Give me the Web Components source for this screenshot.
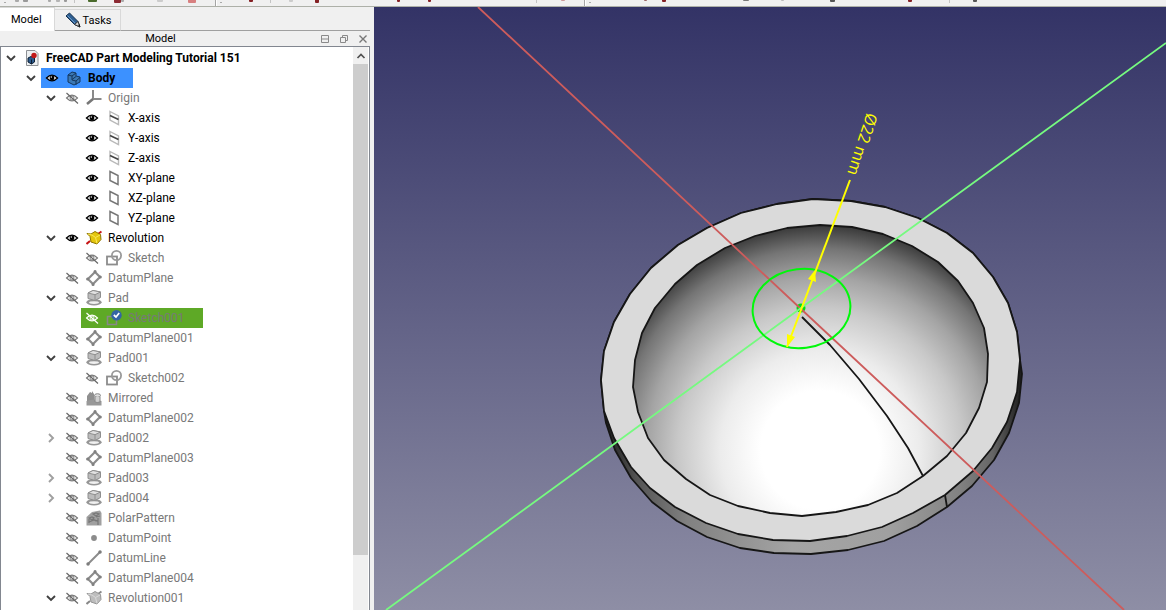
<!DOCTYPE html>
<html lang="en">
<head>
<meta charset="utf-8">
<title>FreeCAD</title>
<style>
  html, body { margin: 0; height: 100%; }
  body { font-family: Roboto, "Open Sans", sans-serif; font-size: 12px; color: #000; background: #f0f0f0; overflow: hidden; }
</style>
</head>
<body>
<cad-app></cad-app>

<script>
const ICONS = {
  doc: '<path d="M2.500 0.500H11L14 3.500V15.500H2.500Z" fill="#eceff1" stroke="#8d9094"/><path d="M4 8L7 6.500L10.500 8V12L7.500 14L4 12Z" fill="#2c5a8c" stroke="#0b1d33"/><path d="M7.500 9.500V14" stroke="#0b1d33"/><circle cx="10" cy="5.500" r="2.700" fill="#c21a1a"/>',
  body: '<path d="M2 5L6 2L10 3V6L14 7V12L8 15L2 12Z" fill="#3b78b4" stroke="#14365c"/><path d="M2 5L6 6V10L10 11V15M6 6L10 3M10 11L14 7.500M6 9.500L10 6.500" fill="none" stroke="#14365c"/>',
  origin: '<path d="M7 0V9H15.500" fill="none" stroke="#8a8a8a" stroke-width="2"/><path d="M7 9L1 14" stroke="#777" stroke-width="2.600"/>',
  axis: '<path d="M4 1.500L12.500 6V14.500L4 10Z" fill="none" stroke="#b9b9b9" stroke-width="1.400"/><path d="M4 5.500L12.500 9.500" stroke="#444" stroke-width="1.600"/>',
  plane: '<path d="M4 1.500L12 5.500V14.500L4 10.500Z" fill="#fff" stroke="#777" stroke-width="1.500"/>',
  revolution: '<path d="M0.500 14L4 11M12 4L15.500 1.500" stroke="#c61414" stroke-width="2"/><path d="M1 3.500L4 6.500L5 12L11 14L15 9.500L14.500 4.500L9 1.500L5 4Z" fill="#e4c60e" stroke="#8f7500"/><path d="M2 4L6 5L9.500 7.500L14 5M9.500 7.500L11 13.500" fill="none" stroke="#fae95d"/>',
  revolutionOff: '<path d="M0.500 14L4 11M12 4L15.500 1.500" stroke="#888" stroke-width="2"/><path d="M1 3.500L4 6.500L5 12L11 14L15 9.500L14.500 4.500L9 1.500L5 4Z" fill="#bdbdbd" stroke="#959595"/><path d="M2 4L6 5L9.500 7.500L14 5M9.500 7.500L11 13.500" fill="none" stroke="#dadada"/>',
  sketch: '<rect x="1" y="6.500" width="10" height="8" fill="none" stroke="#8c8c8c" stroke-width="1.800"/><circle cx="10.500" cy="5.500" r="4.600" fill="none" stroke="#9a9a9a" stroke-width="1.800"/>',
  sketchEdit: '<path d="M6 6.500H1.500V14.500H10.500V10" fill="none" stroke="#888" stroke-width="1.600"/><circle cx="10.500" cy="5.200" r="5.200" fill="#3465a4"/><path d="M7.800 5L10 7L13.200 3" fill="none" stroke="#fff" stroke-width="1.700"/>',
  datumPlane: '<path d="M9 2L14 7L7 14L2 9Z" fill="#fff" stroke="#8c8c8c" stroke-width="2.200"/><path d="M9 1.500h.1M14.200 7h.1M7 14.500h.1M1.600 9h.1" stroke="#808080" stroke-width="3" stroke-linecap="round"/>',
  pad: '<ellipse cx="8" cy="12.300" rx="7.600" ry="3.200" fill="#969696"/><ellipse cx="8" cy="12.600" rx="5" ry="1.400" fill="#f0f0f0"/><path d="M2 3L7 0.500L14.500 2V7.500L9 10.500L2 8.500Z" fill="#bcbcbc" stroke="#8e8e8e"/><path d="M2 3L7 0.500L14.500 2L9 4.700Z" fill="#e0e0e0" stroke="#8e8e8e"/><path d="M9 5V10" stroke="#8e8e8e"/>',
  mirrored: '<path d="M1 15V6L4 2L6 3V1L8 4V15Z" fill="#8f8f8f"/><path d="M8 15V6L10 4H14V15Z" fill="#bbb"/><ellipse cx="11.500" cy="5.500" rx="3" ry="1.800" fill="#ddd" stroke="#888"/><path d="M0.500 11Q8 8 15.500 11V15.500H0.500Z" fill="#999"/><path d="M9 7V12Q11 13 14 12V7" fill="#d0d0d0" stroke="#888"/>',
  polar: '<path d="M0.500 15.500V7L6 2L14 0.500L15.500 3V15.500Z" fill="#a0a0a0"/><path d="M3 8l3-1 2 1-2 2zM7 4l3-1 3 1-3 2zM10 7l4-1M3 12l5-2 4 1v4M7 9l3 2M12 8v3M3 9v4" fill="none" stroke="#777" stroke-width="1.200"/>',
  point: '<circle cx="8" cy="8" r="2.900" fill="#8c8c8c"/>',
  line: '<path d="M2 14L14 2" stroke="#8c8c8c" stroke-width="2"/><path d="M2 14h.1M14 2h.1" stroke="#7d7d7d" stroke-width="3.400" stroke-linecap="round"/>',
  eye: '<path d="M2.500 8Q8 2.300 13.500 8Q8 13.700 2.500 8Z" fill="#fff" stroke="#000" stroke-width="1.400"/><circle cx="8" cy="8" r="2.400" fill="#000"/><circle cx="7.300" cy="7" r="0.700" fill="#fff"/>',
  eyeOff: '<path d="M2.500 8Q8 2.300 13.500 8Q8 13.700 2.500 8Z" fill="var(--eye-fill,#fff)" stroke="var(--eye-ink,#7c7c7c)" stroke-width="1.100"/><circle cx="8" cy="8" r="2" fill="none" stroke="var(--eye-ink,#7c7c7c)"/><path d="M2.500 3L14 13.500" stroke="var(--eye-ink,#666)" stroke-width="1.200"/>',
  open: '<path d="M4 6L8 10L12 6" fill="none" stroke="#404040" stroke-width="1.900"/>',
  closed: '<path d="M6 4L10 8L6 12" fill="none" stroke="#a0a0a0" stroke-width="1.900"/>',
  up: '<path d="M4.500 10L8 6.500L11.500 10" fill="none" stroke="#505050" stroke-width="1.700"/>',
  pencil: '<path d="M1 4L4.500 1L13 9.500L15 15L9.500 12.500Z" fill="#2f5f92" stroke="#142f4d"/><path d="M2.500 3.500L10.500 11.500" stroke="#6b9bc8"/><path d="M9.500 12.500L13 9.500L15 15Z" fill="#d9d9d9" stroke="#333"/><path d="M13 13L15 15V12.500Z" fill="#111"/>',
  shade: '<path d="M4.500 4.500H11.500V11.500H4.500ZM4.500 8H11.500" fill="none" stroke="#8a8a8a"/>',
  float: '<path d="M4.500 6.500H9.500V11.500H4.500ZM6.500 6.500V4.500H11.500V9.500H9.500" fill="none" stroke="#8a8a8a"/>',
  close: '<path d="M4.500 4.500L11.500 11.500M11.500 4.500L4.500 11.500" stroke="#777" stroke-width="1.400"/>'
};

class UiIcon extends HTMLElement {
  connectedCallback() {
    this.attachShadow({ mode: 'open' }).innerHTML = `
      <style>:host{display:inline-flex;flex:none;width:16px;height:16px}svg{display:block;width:100%;height:100%}</style>
      <svg viewBox="0 0 16 16" aria-hidden="true">${ICONS[this.getAttribute('name')] || ''}</svg>`;
  }
}
customElements.define('ui-icon', UiIcon);

class CadToolbar extends HTMLElement {
  connectedCallback() {
    // Lower edges of the tool buttons: [x, width, height, colour]
    const bits = [[15,4,2,'#aaa'],[23,5,2,'#999'],[48,3,2,'#aaa'],[56,4,2,'#b5b5b5'],[64,3,2,'#999'],[88,9,2,'#4a6b2c'],[114,7,3,'#8b2a32'],[121,3,2,'#aaa'],[157,6,2,'#ccc'],[188,8,3,'#d88080'],[249,4,2,'#842024'],[289,4,2,'#ccc'],[315,4,3,'#842024'],[397,3,2,'#842024'],[428,3,2,'#842024'],[561,4,1,'#c99'],[644,3,1,'#966'],[662,4,2,'#842024'],[743,6,1,'#777'],[781,3,1,'#bbb'],[830,5,2,'#555'],[908,4,2,'#842024'],[973,4,2,'#555']];
    const grips = [5, 221, 590], seps = [75, 271, 537, 950], ends = [216, 585];
    this.attachShadow({ mode: 'open' }).innerHTML = `
      <style>:host{display:block;background:#f0f0f0;border-bottom:1px solid #adb0a8;overflow:hidden}svg{display:block;height:6px;width:100%}</style>
      <svg aria-hidden="true">
        ${bits.map(([x, w, h, c]) => `<rect x="${x}" y="-2" width="${w}" height="${h + 2}" rx="1" fill="${c}"/>`).join('')}
        ${grips.map(x => `<rect x="${x - 1}" y="2" width="2" height="1" fill="#aaa"/>`).join('')}
        ${seps.map(x => `<rect x="${x - 1}" width="1" height="3" fill="#c4c4c4"/>`).join('')}
        ${ends.map(x => `<rect x="${x - 1}" width="1" height="6" fill="#a5a5a5"/><rect x="${x}" width="1" height="6" fill="#fff"/>`).join('')}
      </svg>`;
  }
}
customElements.define('cad-toolbar', CadToolbar);

class DockTabs extends HTMLElement {
  connectedCallback() {
    this.attachShadow({ mode: 'open' }).innerHTML = `
      <style>
        :host{display:block;font-size:11px}
        div{display:flex;align-items:stretch;height:24px;margin-right:4px}
        button{font:inherit;color:#000;box-sizing:border-box;border:1px solid #d9d9d9;border-left:0;background:#f0f0f0;padding:0 9px 0 10px;display:flex;align-items:center;gap:2px}
        button[aria-selected=true]{background:#fff;border-bottom:0;padding:0 12px 0 11px}
        button[aria-selected=false]{margin-top:2px;border-bottom-color:#a0a0a0}
        span{flex:1;border-bottom:1px solid #a0a0a0}
      </style>
      <div role="tablist">
        <button role="tab" aria-selected="true">Model</button>
        <button role="tab" aria-selected="false"><ui-icon name="pencil"></ui-icon>Tasks</button>
        <span></span>
      </div>`;
  }
}
customElements.define('dock-tabs', DockTabs);

class DockTitle extends HTMLElement {
  connectedCallback() {
    this.attachShadow({ mode: 'open' }).innerHTML = `
      <style>
        :host{display:flex;align-items:center;height:15px;margin-right:2px;font-size:11px}
        h2{flex:1;margin:0;font:inherit;line-height:15px;text-align:center;padding-left:6px}
        button{flex:none;width:19px;height:15px;padding:0;border:0;background:none;display:flex;align-items:center;justify-content:center}
      </style>
      <h2><slot></slot></h2>
      <button aria-label="Collapse"><ui-icon name="shade"></ui-icon></button>
      <button aria-label="Float"><ui-icon name="float"></ui-icon></button>
      <button aria-label="Close"><ui-icon name="close"></ui-icon></button>`;
  }
}
customElements.define('dock-title', DockTitle);

class TreeItem extends HTMLElement {
  connectedCallback() {
    const a = n => this.getAttribute(n);
    const eye = a('eye'), state = a('state');
    this.setAttribute('role', 'treeitem');
    this.attachShadow({ mode: 'open' }).innerHTML = `
      <style>
        :host{display:flex;height:20px;flex:none;padding-left:calc(var(--depth) * 20px);color:#000}
        :host([eye=off]){color:#787878}
        :host([bold]){font-weight:700}
        :host([mark=body]) .label{background:#3c91ff}
        :host([mark=edit]) .label{background:#5ea926;--eye-fill:#5ea926;--eye-ink:#fff}
        .toggle{width:20px;flex:none;display:flex;align-items:center;justify-content:center}
        .label{display:flex;align-items:center;gap:6px;padding:0 18px 0 3px;white-space:nowrap}
        button{border:0;background:none;padding:0;display:flex}
        span{line-height:20px}
      </style>
      <div class="toggle">${state ? `<button aria-label="Toggle"><ui-icon name="${state}"></ui-icon></button>` : ''}</div>
      <div class="label">
        ${eye ? `<button aria-label="Visibility"><ui-icon name="${eye === 'on' ? 'eye' : 'eyeOff'}"></ui-icon></button>` : ''}
        <ui-icon name="${a('icon')}"></ui-icon><span><slot></slot></span>
      </div>`;
    this.style.setProperty('--depth', a('depth'));
  }
}
customElements.define('tree-item', TreeItem);

class ModelTree extends HTMLElement {
  connectedCallback() {
    const rows = [
      [0, 'open', '', 'doc', 'FreeCAD Part Modeling Tutorial 151', 'bold'],
      [1, 'open', 'on', 'body', 'Body', 'bold mark="body"'],
      [2, 'open', 'off', 'origin', 'Origin'],
      [3, '', 'on', 'axis', 'X-axis'], [3, '', 'on', 'axis', 'Y-axis'], [3, '', 'on', 'axis', 'Z-axis'],
      [3, '', 'on', 'plane', 'XY-plane'], [3, '', 'on', 'plane', 'XZ-plane'], [3, '', 'on', 'plane', 'YZ-plane'],
      [2, 'open', 'on', 'revolution', 'Revolution'],
      [3, '', 'off', 'sketch', 'Sketch'],
      [2, '', 'off', 'datumPlane', 'DatumPlane'],
      [2, 'open', 'off', 'pad', 'Pad'],
      [3, '', 'off', 'sketchEdit', 'Sketch001', 'mark="edit"'],
      [2, '', 'off', 'datumPlane', 'DatumPlane001'],
      [2, 'open', 'off', 'pad', 'Pad001'],
      [3, '', 'off', 'sketch', 'Sketch002'],
      [2, '', 'off', 'mirrored', 'Mirrored'],
      [2, '', 'off', 'datumPlane', 'DatumPlane002'],
      [2, 'closed', 'off', 'pad', 'Pad002'],
      [2, '', 'off', 'datumPlane', 'DatumPlane003'],
      [2, 'closed', 'off', 'pad', 'Pad003'],
      [2, 'closed', 'off', 'pad', 'Pad004'],
      [2, '', 'off', 'polar', 'PolarPattern'],
      [2, '', 'off', 'point', 'DatumPoint'],
      [2, '', 'off', 'line', 'DatumLine'],
      [2, '', 'off', 'datumPlane', 'DatumPlane004'],
      [2, 'open', 'off', 'revolutionOff', 'Revolution001'],
      [3, '', 'off', 'sketch', '']
    ];
    this.attachShadow({ mode: 'open' }).innerHTML = `
      <style>
        :host{display:flex;flex:1;min-height:0;margin-right:4px;border:1px solid #828790;border-bottom:0;background:#fff}
        .rows{flex:1;min-width:0;overflow:hidden;display:flex;flex-direction:column;padding-top:1px}
        .bar{flex:none;width:15px;margin-right:1px;background:#f0f0f0;display:flex;flex-direction:column}
        .bar button{flex:none;height:17px;border:0;padding:0;background:none;display:flex;align-items:center;justify-content:center}
        .track{flex:1}
        .thumb{height:90%;background:#cdcdcd}
      </style>
      <div class="rows" role="tree">
        ${rows.map(([d, s, e, i, t, x]) => `<tree-item depth="${d}" state="${s}" eye="${e}" icon="${i}" ${x || ''}>${t}</tree-item>`).join('')}
      </div>
      <div class="bar"><button aria-label="Scroll up"><ui-icon name="up"></ui-icon></button><div class="track"><div class="thumb"></div></div></div>`;
  }
}
customElements.define('model-tree', ModelTree);

class CadViewport extends HTMLElement {
  connectedCallback() {
    const outerTop = '604,411 601,380 604,351 614,322 630,294 651,268 678,245 707,228 741,213 777,204 813,199 851,201 885,207 918,218 947,233 973,253 993,277 1008,303 1017,332 1020,360';
    const outerLow = '1017,392 1007,422 992,448 973,471 945,495 913,513 882,527 847,536 810,541 773,540 738,534 706,523 675,507 650,488 631,467 614,438';
    const wall = '1020,360 1022,374 1019,403 1009,433 994,460 972,486 947,507 917,526 884,541 848,550 811,554 774,553 740,548 707,537 677,521 652,502 631,478 615,450 606,423 604,411';
    const bowl = '820,225 787,228 755,236 725,248 697,265 675,284 655,308 642,333 635,360 633,387 638,412 648,438 664,460 686,479 710,495 738,506 770,513 802,516 836,512 868,505 897,493 923,476 947,456 966,433 979,408 987,382 988,354 984,328 973,303 958,281 938,262 912,246 883,234 852,227';
    this.attachShadow({ mode: 'open' }).innerHTML = `
      <style>
        :host{display:block;min-width:0;min-height:0;background:linear-gradient(#333366,#8e8ea5)}
        svg{display:block;width:100%;height:100%}
        text{font-family:"Open Sans",sans-serif;font-weight:400;font-size:16px;fill:#ff0}
      </style>
      <svg viewBox="374 7 792 603" preserveAspectRatio="xMidYMid slice" role="img" aria-label="3D view">
        <defs>
          <radialGradient id="bowl" gradientUnits="userSpaceOnUse" cx="820" cy="450" r="237">
            <stop offset="0.250" stop-color="#fff"/><stop offset="0.420" stop-color="#ececec"/><stop offset="0.600" stop-color="#c8c8c8"/>
            <stop offset="0.730" stop-color="#a4a4a4"/><stop offset="0.850" stop-color="#757575"/><stop offset="0.960" stop-color="#333"/>
          </radialGradient>
          <linearGradient id="wall" gradientUnits="userSpaceOnUse" x1="604" y1="0" x2="1022" y2="0">
            <stop offset="0" stop-color="#1c1c1c"/><stop offset="0.080" stop-color="#555"/><stop offset="0.200" stop-color="#818181"/><stop offset="0.450" stop-color="#a4a4a4"/>
            <stop offset="0.680" stop-color="#a0a0a0"/><stop offset="0.850" stop-color="#828282"/><stop offset="0.930" stop-color="#666"/><stop offset="1" stop-color="#1c1c1c"/>
          </linearGradient>
        </defs>
        <g stroke="#161616" stroke-width="1.800" stroke-linejoin="round">
          <polygon points="${outerTop} ${wall}" fill="url(#wall)"/>
          <polygon points="${outerTop} ${outerLow}" fill="#dadada"/>
          <polygon points="${bowl}" fill="url(#bowl)"/>
          <path d="M802 317L830 345L859 379L887 416L908 448L923 476M945 495L947 507" fill="none"/>
        </g>
        <circle cx="801" cy="308" r="4.500" fill="#00e010"/>
        <g fill="none" stroke-width="1.800">
          <path d="M478 7L801 309L1124 610" stroke="#cd5c5c"/>
          <path d="M386 610L801 308L1166 43" stroke="#76fa80"/>
          <ellipse cx="801.500" cy="308.500" rx="49" ry="39.500" transform="rotate(-7 801.500 308.500)" stroke="#00f80a" stroke-width="2"/>
          <path d="M850 180L787 347" stroke="#ff0" stroke-width="2"/>
        </g>
        <path d="M815 270L808 279L816 282ZM787 347L787 334L795 337Z" fill="#ff0"/>
        <text transform="translate(867 112) rotate(108)">Ø22 mm</text>
      </svg>`;
  }
}
customElements.define('cad-viewport', CadViewport);

class CadApp extends HTMLElement {
  connectedCallback() {
    this.attachShadow({ mode: 'open' }).innerHTML = `
      <style>
        :host{display:grid;grid-template-rows:auto minmax(0,1fr);height:100vh}
        main{display:grid;grid-template-columns:374px minmax(0,1fr);min-height:0}
        aside{display:flex;flex-direction:column;min-height:0;background:#f0f0f0}
      </style>
      <cad-toolbar></cad-toolbar>
      <main>
        <aside><dock-tabs></dock-tabs><dock-title>Model</dock-title><model-tree></model-tree></aside>
        <cad-viewport></cad-viewport>
      </main>`;
  }
}
customElements.define('cad-app', CadApp);
</script>
</body>
</html>
